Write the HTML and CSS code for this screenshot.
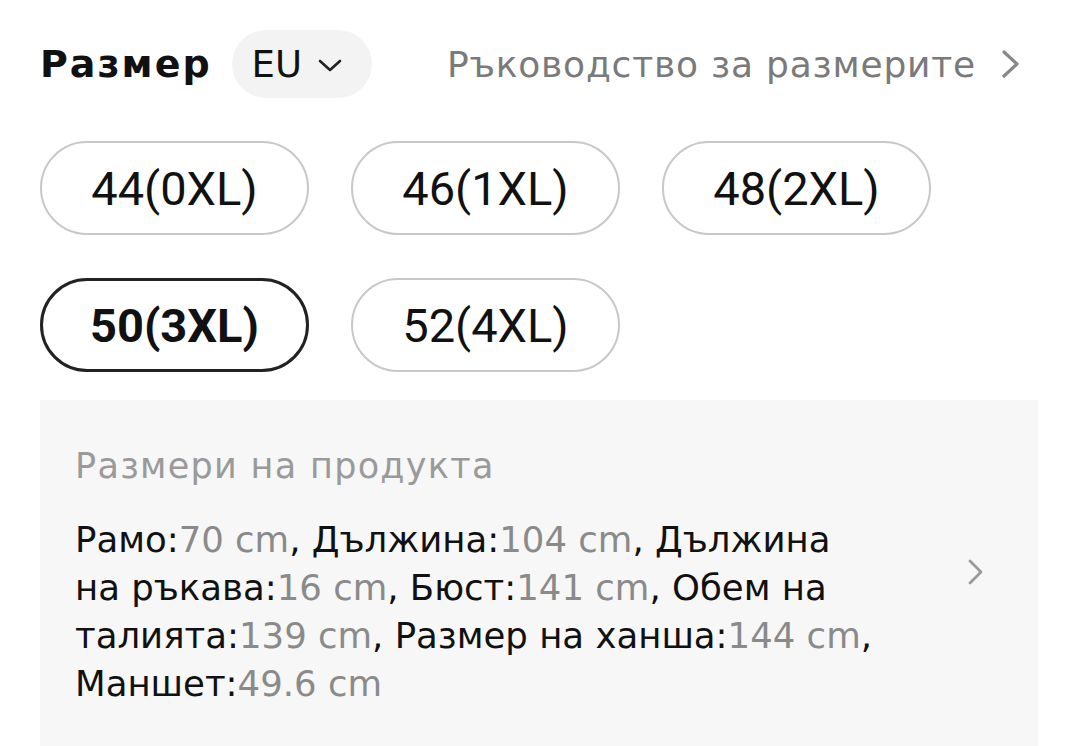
FILE: index.html
```html
<!DOCTYPE html>
<html lang="bg">
<head>
<meta charset="utf-8">
<link rel="stylesheet" href="styles.css">
</head>
<body>
<div class="page">
  <div class="header">
    <div class="title">Размер</div>
    <div class="unit">EU
      <svg class="down" width="24" height="14" viewBox="0 0 24 14"><path d="M2 2 L12 11 L22 2" fill="none" stroke="#222" stroke-width="2.6" stroke-linecap="round" stroke-linejoin="round"/></svg>
    </div>
    <div class="guide">Ръководство за размерите
      <svg class="chev" width="22" height="28" viewBox="0 0 22 28"><path d="M4 2 L17 14 L4 26" fill="none" stroke="#888" stroke-width="3.2" stroke-linecap="round" stroke-linejoin="round"/></svg>
    </div>
  </div>
  <div class="sizes">
    <div class="size">44(0XL)</div>
    <div class="size">46(1XL)</div>
    <div class="size">48(2XL)</div>
    <div class="size selected">50(3XL)</div>
    <div class="size">52(4XL)</div>
  </div>
  <div class="info">
    <div class="info-text">
      <div class="info-title">Размери на продукта</div>
      <div class="info-body">Рамо:<span class="v">70 cm</span>, Дължина:<span class="v">104 cm</span>, Дължина на ръкава:<span class="v">16 cm</span>, Бюст:<span class="v">141 cm</span>, Обем на талията:<span class="v">139 cm</span>, Размер на ханша:<span class="v">144 cm</span>, Маншет:<span class="v">49.6 cm</span></div>
    </div>
    <svg class="info-chev" width="20" height="28" viewBox="0 0 20 28"><path d="M4 3 L15 14 L4 25" fill="none" stroke="#999" stroke-width="2.8" stroke-linecap="round" stroke-linejoin="round"/></svg>
  </div>
</div>
</body>
</html>
```
FILE: styles.css
```css
html, body {
  margin: 0;
  padding: 0;
  background: #fff;
}
body {
  font-family: "DejaVu Sans", Roboto, sans-serif;
  color: #111;
  width: 1078px;
  height: 746px;
  overflow: hidden;
}
.page {
  padding: 30px 40px 0 40px;
}
.header {
  display: flex;
  align-items: center;
  height: 68px;
}
.title {
  font-size: 38px;
  font-weight: 700;
  letter-spacing: 2px;
  color: #111;
  margin-right: 20px;
}
.unit {
  display: flex;
  align-items: center;
  height: 68px;
  padding: 0 30px 0 20px;
  background: #f3f3f3;
  border-radius: 34px;
  font-size: 37px;
  color: #111;
}
.down {
  margin-left: 16px;
  margin-top: 4px;
}
.guide {
  margin-left: auto;
  display: flex;
  align-items: center;
  font-size: 36px;
  letter-spacing: 0.8px;
  color: #7a7a7a;
  margin-right: 16px;
}
.chev {
  margin-left: 24px;
}
.sizes {
  display: grid;
  grid-template-columns: repeat(3, 269px);
  column-gap: 42px;
  row-gap: 43px;
  margin-top: 43px;
}
.size {
  height: 94px;
  box-sizing: border-box;
  border: 2px solid #c8c8c8;
  border-radius: 47px;
  display: flex;
  align-items: center;
  justify-content: center;
  font-family: Roboto, sans-serif;
  font-size: 47px;
  color: #111;
}
.size.selected {
  border: 3px solid #222;
  font-weight: 700;
}
.info {
  margin-top: 28px;
  background: #f7f7f7;
  display: flex;
  padding: 42px 52px 40px 35px;
  height: 380px;
  box-sizing: border-box;
  align-items: flex-start;
}
.info-text {
  width: 802px;
}
.info-title {
  font-size: 35px;
  letter-spacing: 1.3px;
  color: #9a9a9a;
  line-height: 48px;
}
.info-body {
  margin-top: 26px;
  font-size: 35.5px;
  line-height: 48px;
  color: #111;
}
.v {
  color: #8a8a8a;
}
.info-chev {
  margin-left: auto;
  margin-top: 116px;
}
```
